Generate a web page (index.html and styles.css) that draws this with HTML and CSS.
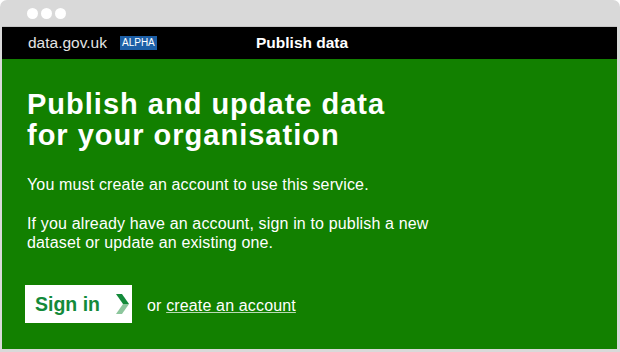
FILE: index.html
```html
<!DOCTYPE html>
<html>
<head>
<meta charset="utf-8">
<link rel="stylesheet" href="styles.css">
</head>
<body>
<div class="window">
  <div class="chrome">
    <span class="dot"></span><span class="dot"></span><span class="dot"></span>
  </div>
  <div class="page">
    <header class="topbar">
      <div class="brand">
        <span class="logo">data.gov.uk</span>
        <span class="tag">ALPHA</span>
      </div>
      <div class="service">Publish data</div>
    </header>
    <main class="hero">
      <h1 class="title">Publish and update data<br>for your organisation</h1>
      <p class="text">You must create an account to use this service.</p>
      <p class="text">If you already have an account, sign in to publish a new<br>dataset or update an existing one.</p>
      <div class="actions">
        <a class="button" href="#">Sign in
          <svg class="chev" width="13" height="20" viewBox="0 0 13 20">
            <polygon points="0,0 6,0 13,10 7,10" fill="#138a3a"/>
            <polygon points="7,10 13,10 6,20 0,20" fill="#8cc69c"/>
          </svg>
        </a>
        <span class="or">or <a class="link" href="#">create an account</a></span>
      </div>
    </main>
  </div>
</div>
</body>
</html>
```
FILE: styles.css
```css
html, body {
  margin: 0;
  padding: 0;
  background: #ffffff;
}
body {
  font-family: "Liberation Sans", Arial, sans-serif;
}
.window {
  width: 620px;
  height: 352px;
  box-sizing: border-box;
  background: #d9d9d9;
  border-radius: 7px 7px 0 0;
  padding: 0 3px 3px 2px;
  display: flex;
  flex-direction: column;
}
.chrome {
  height: 26px;
  display: flex;
  align-items: center;
  gap: 3px;
  padding-left: 25px;
  box-sizing: border-box;
}
.dot {
  width: 11px;
  height: 11px;
  border-radius: 50%;
  background: #ffffff;
}
.page {
  flex: 1;
  display: flex;
  flex-direction: column;
  border-top: 1px solid #c4c4c4;
}
.topbar {
  height: 32px;
  background: #000000;
  display: flex;
  align-items: center;
  padding-left: 26px;
}
.brand {
  display: flex;
  align-items: center;
  width: 228px;
}
.logo {
  color: #e4e4e4;
  font-size: 15.5px;
}
.tag {
  margin-left: 13px;
  background: #1d5fa6;
  color: #ffffff;
  font-size: 10px;
  padding: 1px 2px;
  line-height: 12px;
}
.service {
  color: #ffffff;
  font-weight: bold;
  font-size: 15.5px;
}
.hero {
  flex: 1;
  background: #128000;
  padding: 30px 0 0 25px;
  color: #ffffff;
}
.title {
  margin: 0;
  font-size: 29px;
  line-height: 31px;
  letter-spacing: 1px;
  font-weight: bold;
}
.text {
  margin: 24px 0 0;
  font-size: 16px;
  line-height: 19px;
  letter-spacing: 0.15px;
}
.text + .text {
  margin-top: 20px;
}
.actions {
  margin: 33px 0 0 -2px;
  display: flex;
  align-items: baseline;
}
.button {
  display: flex;
  align-items: center;
  gap: 16px;
  background: #ffffff;
  color: #138a3a;
  font-weight: bold;
  font-size: 19.5px;
  line-height: 38px;
  height: 38px;
  text-decoration: none;
  padding: 0 3px 0 10px;
}
.or {
  margin-left: 15px;
  font-size: 16px;
  line-height: 19px;
  letter-spacing: 0.15px;
}
.link {
  color: #ffffff;
  text-decoration: underline;
  text-decoration-color: rgba(255, 255, 255, 0.7);
}
```
